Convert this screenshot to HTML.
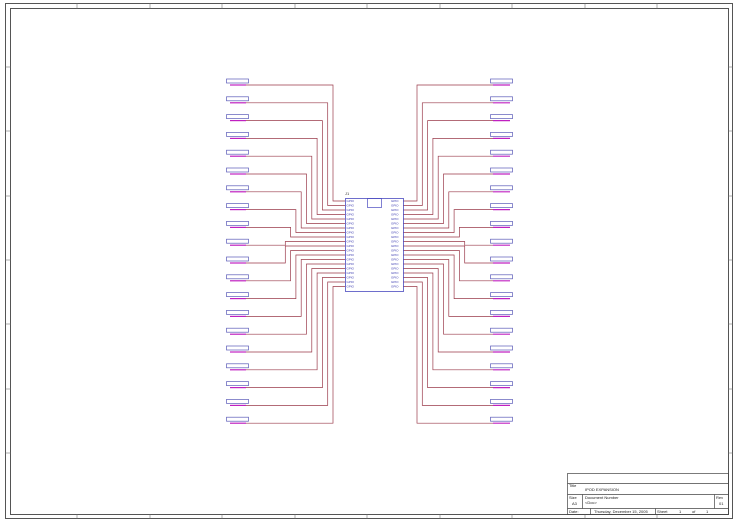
<!DOCTYPE html>
<html><head><meta charset="utf-8"><style>
html,body{margin:0;padding:0;background:#fff;width:740px;height:523px;overflow:hidden}
svg{display:block;font-family:"Liberation Sans",sans-serif}
</style></head><body>
<svg id="s" width="740" height="523" viewBox="0 0 740 523" xmlns="http://www.w3.org/2000/svg">
<rect x="5.5" y="3.5" width="727" height="515" fill="none" stroke="#555" stroke-width="1"/>
<rect x="10.5" y="8.5" width="718" height="506" fill="none" stroke="#555" stroke-width="1"/>
<g id="ticks" stroke="#777" stroke-width="0.6"></g>
<g id="w" fill="none" stroke="#9a3a4a" stroke-width="0.7"></g>
<g id="c"></g>
<rect x="345.5" y="198.5" width="58" height="93" fill="none" stroke="#4a4ac0" stroke-width="0.8"/>
<rect x="367.5" y="198.5" width="14" height="9" fill="none" stroke="#4a4ac0" stroke-width="0.7"/>
<text x="345" y="195" font-size="4" fill="#333">J1</text>
<g id="pl" font-size="3" fill="#3a3ab0"></g>
<!-- title block -->
<g fill="none" stroke="#444" stroke-width="0.7">
<rect x="567.5" y="473.5" width="161" height="41"/>
<line x1="567.5" y1="483.5" x2="728.5" y2="483.5"/>
<line x1="567.5" y1="494.5" x2="728.5" y2="494.5"/>
<line x1="567.5" y1="508.5" x2="728.5" y2="508.5"/>
<line x1="582.5" y1="494.5" x2="582.5" y2="508.5"/>
<line x1="714.5" y1="494.5" x2="714.5" y2="508.5"/>
<line x1="590.5" y1="508.5" x2="590.5" y2="514.5"/>
<line x1="655.5" y1="508.5" x2="655.5" y2="514.5"/>
</g>
<g font-size="4" fill="#222">
<text x="569" y="487">Title</text>
<text x="585" y="491">IPOD EXPANSION</text>
<text x="569" y="499">Size</text><text x="572" y="505">A3</text>
<text x="585" y="499">Document Number</text><text x="585" y="504">&lt;Doc&gt;</text>
<text x="716" y="499">Rev</text><text x="719" y="505">01</text>
<text x="569" y="513">Date:</text>
<text x="594" y="513">Thursday, December 15, 2005</text>
<text x="657" y="513">Sheet</text><text x="679" y="513">1</text><text x="692" y="513">of</text><text x="706" y="513">1</text>
</g>
</svg>
<script>
var NS="http://www.w3.org/2000/svg";
function el(p,t,a){var e=document.createElementNS(NS,t);for(var k in a)e.setAttribute(k,a[k]);document.getElementById(p).appendChild(e);return e;}
var tx=[77,150,222,295,367,440,512,585,657];
tx.forEach(function(x){el("ticks","line",{x1:x,y1:3.5,x2:x,y2:8.5});el("ticks","line",{x1:x,y1:514.5,x2:x,y2:518.5});});
[67,131,196,260,324,389,453].forEach(function(y){el("ticks","line",{x1:5.5,y1:y,x2:10.5,y2:y});el("ticks","line",{x1:728.5,y1:y,x2:732.5,y2:y});});
for(var i=0;i<20;i++){
 var y=82+i*17.8, py=201+i*4.5;
 var k=i<10?i:19-i;
 var xl=333-k*5.3, xr=417+k*5.3;
 // left connector
 el("c","rect",{x:226.5,y:y-3,width:22,height:4,fill:"none",stroke:"#5a5ab8","stroke-width":0.7});
 el("c","line",{x1:230,y1:y+3,x2:246,y2:y+3,stroke:"#c020c0","stroke-width":1.2});
 el("c","rect",{x:490.5,y:y-3,width:22,height:4,fill:"none",stroke:"#5a5ab8","stroke-width":0.7});
 el("c","line",{x1:493,y1:y+3,x2:510,y2:y+3,stroke:"#c020c0","stroke-width":1.2});
 el("w","polyline",{points:"246,"+(y+3)+" "+xl+","+(y+3)+" "+xl+","+py+" 345,"+py});
 el("w","polyline",{points:"493,"+(y+3)+" "+xr+","+(y+3)+" "+xr+","+py+" 403,"+py});
 var t=el("pl","text",{x:346.5,y:py+1});t.textContent="GPIO";
 var t2=el("pl","text",{x:391,y:py+1});t2.textContent="GPIO";
}
</script>
</body></html>
